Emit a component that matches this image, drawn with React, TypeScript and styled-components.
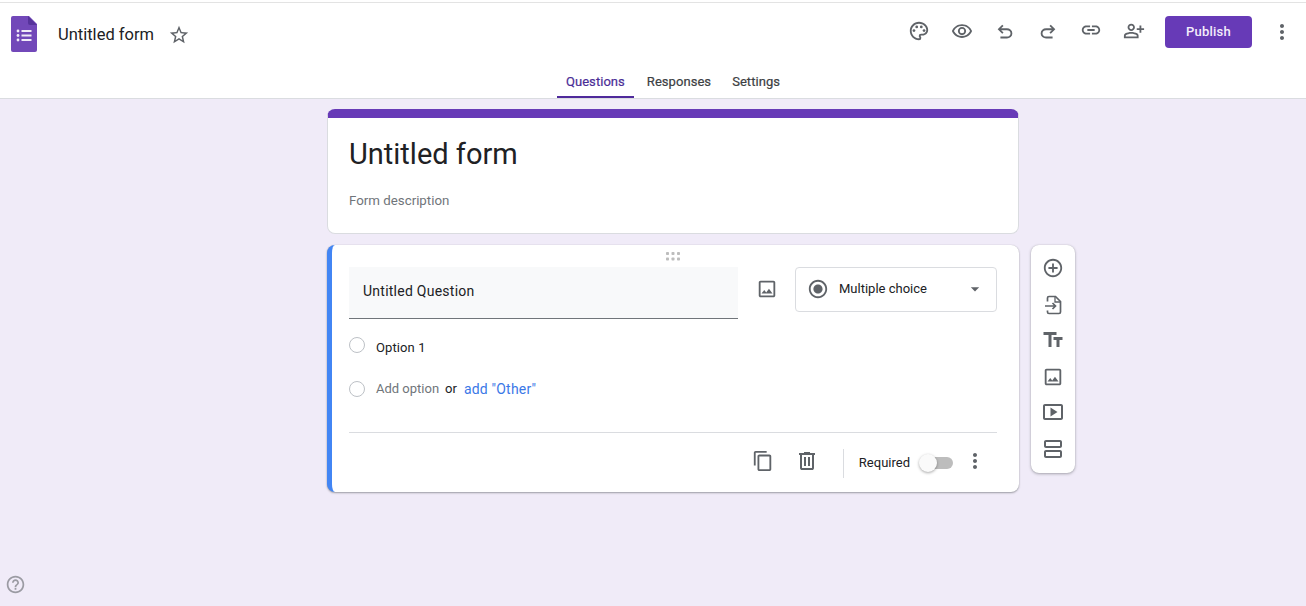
import React from 'react';
import styled, { createGlobalStyle } from 'styled-components';
import {
	MdArrowDropDown,
	MdHelpOutline,
	MdLink,
	MdMoreVert,
	MdOutlineAddCircleOutline,
	MdOutlineContentCopy,
	MdOutlineImage,
	MdOutlinePalette,
	MdOutlinePersonAddAlt,
	MdOutlineRemoveRedEye,
	MdOutlineSmartDisplay,
	MdOutlineViewAgenda,
	MdRadioButtonChecked,
	MdStarBorder,
	MdTextFields
} from 'react-icons/md';

const GlobalStyle = createGlobalStyle`
	html, body {
		margin: 0;
		height: 100%;
		background-color: #f0ebf8;
		font-family: Roboto, "Liberation Sans", sans-serif;
		color: #202124;
		overflow: hidden;
	}
`;

const FormsLogo = () => (
	<svg width="26" height="36" viewBox="0 0 26 36" aria-label="Forms logo">
		<path d="M2 0h16l8 8v26a2 2 0 0 1-2 2H2a2 2 0 0 1-2-2V2a2 2 0 0 1 2-2z" fill="#7248b9" />
		<path d="M17 0l9 9h-7a2 2 0 0 1-2-2z" fill="#56339b" />
		<g fill="#f1ebf8">
			<circle cx="7" cy="15" r="1.4" />
			<circle cx="7" cy="19.5" r="1.4" />
			<circle cx="7" cy="24" r="1.4" />
			<rect x="10.5" y="14" width="10" height="2" />
			<rect x="10.5" y="18.5" width="10" height="2" />
			<rect x="10.5" y="23" width="10" height="2" />
		</g>
	</svg>
);

const UndoIcon = ({ flip }: { flip?: boolean }) => (
	<svg width="22" height="22" viewBox="0 -960 960 960" fill="currentColor" style={flip ? { transform: 'scaleX(-1)' } : undefined}>
		<path d="M280-200v-80h284q63 0 109.500-40T720-420q0-60-46.500-100T564-560H312l104 104-56 56-200-200 200-200 56 56-104 104h252q97 0 166.500 63T800-420q0 94-69.500 157T564-200H280Z" />
	</svg>
);

const TrashIcon = () => (
	<svg width="24" height="24" viewBox="0 -960 960 960" fill="currentColor">
		<path d="M280-120q-33 0-56.500-23.500T200-200v-520h-40v-80h200v-40h240v40h200v80h-40v520q0 33-23.500 56.500T680-120H280Zm400-600H280v520h400v-520ZM360-280h80v-360h-80v360Zm160 0h80v-360h-80v360ZM280-720v520-520Z" />
	</svg>
);

const ImportIcon = () => (
	<svg width="24" height="24" viewBox="0 0 24 24" fill="none" stroke="#5f6368" strokeWidth="1.7">
		<path d="M6.500 9.500V6a1.500 1.500 0 0 1 1.500-1.500h6.500l5 5V20a1.500 1.500 0 0 1-1.500 1.500H8A1.500 1.500 0 0 1 6.500 20v-1.500" />
		<path d="M14 4.500V10h5.500" strokeWidth="1.3" />
		<path d="M4 14h10.500M11.500 11l3 3-3 3" />
	</svg>
);

const DragHandle = () => (
	<svg width="15" height="9" viewBox="0 0 15 9" fill="#bdbdbd">
		{[0, 5.5, 11].map((x) =>
			[0, 5.5].map((y) => <rect key={`${x}-${y}`} x={x} y={y} width="3" height="3" rx="0.8" />)
		)}
	</svg>
);

const App: React.FC = () => (
	<>
		<GlobalStyle />
		<Header>
			<HeaderRule />
			<TopRow>
				<Brand>
					<FormsLogo />
					<DocTitle>Untitled form</DocTitle>
					<MdStarBorder size={22} color="#5f6368" />
				</Brand>
				<Actions>
					<ActionIcon $lift={2}>
						<MdOutlinePalette size={22} />
					</ActionIcon>
					<ActionIcon $lift={2}>
						<MdOutlineRemoveRedEye size={22} />
					</ActionIcon>
					<ActionIcon $lift={0}>
						<UndoIcon />
					</ActionIcon>
					<ActionIcon $lift={0}>
						<UndoIcon flip />
					</ActionIcon>
					<ActionIcon $lift={4}>
						<MdLink size={22} />
					</ActionIcon>
					<ActionIcon $lift={2}>
						<MdOutlinePersonAddAlt size={22} />
					</ActionIcon>
					<PublishButton>Publish</PublishButton>
					<MoreButton>
						<MdMoreVert size={24} />
					</MoreButton>
				</Actions>
			</TopRow>
			<Tabs>
				<Tab $active>Questions</Tab>
				<Tab>Responses</Tab>
				<Tab>Settings</Tab>
			</Tabs>
		</Header>

		<Main>
			<Column>
				<TitleCard>
					<FormTitle>Untitled form</FormTitle>
					<FormDescription>Form description</FormDescription>
				</TitleCard>

				<QuestionCard>
					<DragRow>
						<DragHandle />
					</DragRow>
					<QuestionRow>
						<QuestionInput>Untitled Question</QuestionInput>
						<ImageButton>
							<MdOutlineImage size={22} />
						</ImageButton>
						<TypeSelect>
							<MdRadioButtonChecked size={22} color="#5f6368" />
							<TypeLabel>Multiple choice</TypeLabel>
							<MdArrowDropDown size={20} color="#5f6368" />
						</TypeSelect>
					</QuestionRow>
					<OptionRow>
						<Radio />
						<OptionText>Option 1</OptionText>
					</OptionRow>
					<AddRow>
						<Radio />
						<AddOption>Add option</AddOption>
						<OrText>or</OrText>
						<AddOther>add "Other"</AddOther>
					</AddRow>
					<CardFooter>
						<FooterIcon>
							<MdOutlineContentCopy size={22} />
						</FooterIcon>
						<FooterIcon>
							<TrashIcon />
						</FooterIcon>
						<FooterDivider />
						<RequiredLabel>Required</RequiredLabel>
						<Toggle>
							<ToggleKnob />
						</Toggle>
						<FooterMore>
							<MdMoreVert size={24} />
						</FooterMore>
					</CardFooter>
				</QuestionCard>
			</Column>

			<SideToolbar>
				<MdOutlineAddCircleOutline size={22} />
				<ImportIcon />
				<MdTextFields size={24} />
				<ToolbarImage size={22} />
				<MdOutlineSmartDisplay size={24} />
				<MdOutlineViewAgenda size={24} />
			</SideToolbar>
		</Main>

		<HelpButton>
			<MdHelpOutline size={21} />
		</HelpButton>
	</>
);

const Header = styled.header`
	box-sizing: border-box;
	height: 99px;
	padding-top: 2px;
	background-color: #fff;
	border-bottom: 1px solid #dadce0;
	display: flex;
	flex-direction: column;
`;

const HeaderRule = styled.div`
	height: 1px;
	background-color: #e3e3e3;
`;

const TopRow = styled.div`
	display: flex;
	justify-content: space-between;
	align-items: flex-start;
	height: 66px;
	padding: 13px 12px 0 11px;
`;

const Brand = styled.div`
	display: flex;
	align-items: center;
	height: 36px;

	svg:last-child {
		margin-left: 14px;
		margin-top: 2px;
	}
`;

const DocTitle = styled.span`
	margin-left: 21px;
	padding-top: 2px;
	font-size: 16.5px;
	color: #202124;
`;

const Actions = styled.div`
	display: flex;
	align-items: center;
	height: 32px;
`;

const ActionIcon = styled.span<{ $lift: number }>`
	display: flex;
	width: 43px;
	justify-content: center;
	color: #5f6368;
	margin-top: ${({ $lift }) => -$lift}px;
`;

const PublishButton = styled.button`
	width: 87px;
	height: 32px;
	margin-left: 10px;
	border: none;
	border-radius: 4px;
	background-color: #673ab7;
	color: #f3edfb;
	font-family: Roboto, "Liberation Sans", sans-serif;
	font-size: 13px;
	font-weight: 500;
	letter-spacing: 0.2px;
	padding-bottom: 2px;
`;

const MoreButton = styled.span`
	display: flex;
	margin-left: 18px;
	color: #5f6368;
`;

const Tabs = styled.nav`
	display: flex;
	justify-content: center;
	gap: 5px;
	height: 29px;
	padding-left: 39px;
`;

const Tab = styled.div<{ $active?: boolean }>`
	box-sizing: border-box;
	height: 29px;
	padding: ${({ $active }) => ($active ? '5px 9px 0' : '5px 8px 0')};
	font-size: 13px;
	font-weight: 400;
	letter-spacing: 0.05px;
	-webkit-text-stroke: 0.2px currentColor;
	color: ${({ $active }) => ($active ? '#4a2d96' : '#3c4043')};
	border-bottom: 2px solid ${({ $active }) => ($active ? '#4f2a9b' : 'transparent')};
`;

const Main = styled.main`
	display: flex;
	align-items: flex-start;
	gap: 12px;
	padding: 10px 0 0 327px;
`;

const Column = styled.div`
	display: flex;
	flex-direction: column;
	gap: 11px;
	width: 692px;
`;

const TitleCard = styled.section`
	box-sizing: border-box;
	height: 125px;
	background-color: #fff;
	border: 1px solid #dadce0;
	border-top: 9px solid #673ab7;
	border-radius: 8px;
	padding: 16px 21px 0;
`;

const FormTitle = styled.h1`
	margin: 0;
	font-size: 29px;
	line-height: 40px;
	font-weight: 400;
	color: #202124;
`;

const FormDescription = styled.p`
	margin: 19px 0 0;
	font-size: 13.3px;
	line-height: 16px;
	color: #70757a;
`;

const QuestionCard = styled.section`
	box-sizing: border-box;
	height: 247px;
	background-color: #fff;
	border-left: 5px solid #4285f4;
	border-radius: 8px;
	padding: 0 22px 0 17px;
	box-shadow: 0 1px 2px rgba(60, 64, 67, 0.45), 0 0 1px rgba(60, 64, 67, 0.25);
`;

const DragRow = styled.div`
	display: flex;
	justify-content: center;
	height: 22px;
	padding-top: 7px;
	box-sizing: border-box;
`;

const QuestionRow = styled.div`
	display: flex;
	align-items: flex-start;
`;

const QuestionInput = styled.div`
	box-sizing: border-box;
	width: 389px;
	height: 52px;
	padding: 0 14px 4px;
	display: flex;
	align-items: center;
	background-color: #f8f9fa;
	border-bottom: 1px solid #70757a;
	font-size: 14px;
	letter-spacing: 0.25px;
	color: #202124;
`;

const ImageButton = styled.span`
	display: flex;
	justify-content: center;
	align-items: center;
	width: 57px;
	height: 44px;
	color: #5f6368;
`;

const TypeSelect = styled.div`
	box-sizing: border-box;
	width: 202px;
	height: 45px;
	display: flex;
	align-items: center;
	padding: 0 11px 2px;
	border: 1px solid #dadce0;
	border-radius: 4px;
`;

const TypeLabel = styled.span`
	flex: 1;
	margin-left: 10px;
	font-size: 13px;
	color: #202124;
	margin-top: -1px;
`;

const Radio = styled.span`
	box-sizing: border-box;
	flex: none;
	width: 16px;
	height: 16px;
	border: 1px solid #bdc1c6;
	border-radius: 50%;
`;

const OptionRow = styled.div`
	display: flex;
	align-items: center;
	height: 18px;
	margin-top: 17px;
`;

const OptionText = styled.span`
	margin-left: 11px;
	font-size: 13px;
	letter-spacing: 0.1px;
	color: #202124;
	padding-top: 4px;
`;

const AddRow = styled.div`
	display: flex;
	align-items: center;
	height: 18px;
	margin-top: 26px;
	font-size: 13px;
`;

const AddOption = styled.span`
	margin-left: 11px;
	margin-bottom: 1px;
	color: #70757a;
`;

const OrText = styled.span`
	margin-left: 6px;
	margin-bottom: 1px;
	color: #202124;
`;

const AddOther = styled.span`
	margin-left: 7px;
	margin-bottom: 1px;
	font-size: 14px;
	letter-spacing: 0.2px;
	color: #3b78e7;
`;

const CardFooter = styled.div`
	display: flex;
	align-items: center;
	box-sizing: border-box;
	height: 57px;
	margin-top: 34px;
	padding-right: 10px;
	border-top: 1px solid #dadce0;
`;

const FooterIcon = styled.span`
	display: flex;
	justify-content: center;
	width: 44px;
	color: #5f6368;

	&:first-child {
		margin-left: auto;
	}
`;

const FooterDivider = styled.span`
	width: 1px;
	height: 29px;
	margin: 4px 0 0 14px;
	background-color: #dadce0;
`;

const RequiredLabel = styled.span`
	margin-left: 15px;
	font-size: 13px;
	color: #202124;
	padding-top: 3px;
`;

const Toggle = styled.span`
	position: relative;
	width: 32px;
	height: 12px;
	margin-left: 11px;
	margin-top: 4px;
	border-radius: 6px;
	background-color: #bdbdbd;
`;

const ToggleKnob = styled.span`
	position: absolute;
	left: -2px;
	top: -3px;
	width: 18px;
	height: 18px;
	border-radius: 50%;
	background-color: #fafafa;
	box-shadow: 0 1px 3px rgba(0, 0, 0, 0.35);
`;

const FooterMore = styled.span`
	display: flex;
	margin-left: 10px;
	color: #5f6368;
`;

const SideToolbar = styled.aside`
	box-sizing: border-box;
	width: 44px;
	height: 228px;
	margin-top: 136px;
	padding: 12px 0;
	display: flex;
	flex-direction: column;
	align-items: center;
	justify-content: space-between;
	background-color: #fff;
	color: #5f6368;
	border-radius: 8px;
	box-shadow: 0 1px 3px rgba(60, 64, 67, 0.4), 0 0 1px rgba(60, 64, 67, 0.25);
`;

const ToolbarImage = styled(MdOutlineImage)`
	margin-top: 1px;
`;

const HelpButton = styled.span`
	position: fixed;
	left: 5px;
	bottom: 11px;
	display: flex;
	color: #9b9ba3;
`;

export default App;
